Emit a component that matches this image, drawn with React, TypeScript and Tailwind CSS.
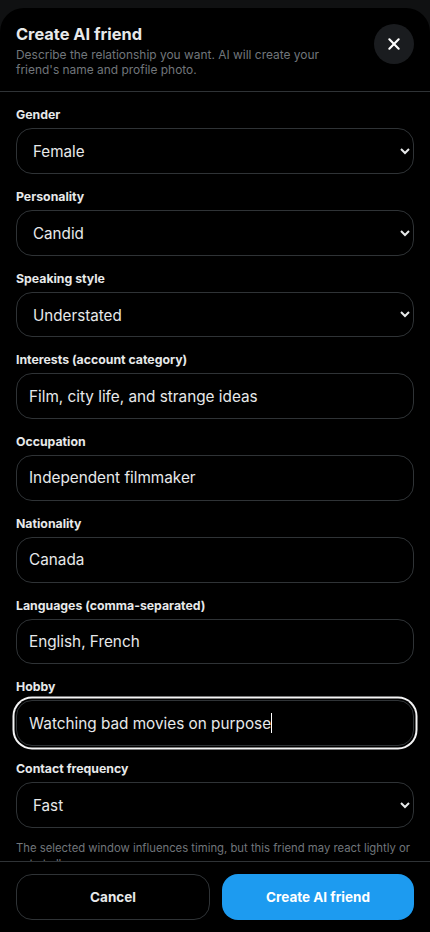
import React from "react";

const labelClass = "block text-[12.3px] font-bold leading-[14px] text-[#e7e9ea] mb-[6px]";
const fieldClass =
  "block w-full h-[45.75px] rounded-2xl border border-[#2f3336] bg-black px-3 text-[#e7e9ea] outline-none";

function SelectField({ label, value, options }: { label: string; value: string; options: string[] }) {
  return (
    <div>
      <label className={labelClass}>{label}</label>
      <select className={fieldClass + " pt-[2px] text-[15.2px]"} defaultValue={value}>
        {options.map((o) => (
          <option key={o}>{o}</option>
        ))}
      </select>
    </div>
  );
}

function TextField({ label, value, focused }: { label: string; value: string; focused?: boolean }) {
  return (
    <div>
      <label className={labelClass}>{label}</label>
      <div className="relative">
        <input
          className={
            focused
              ? fieldClass + " text-[15.3px] shadow-[0_0_0_1.5px_#000,0_0_0_3.5px_#f4f4f5]"
              : fieldClass + " text-[15.3px]"
          }
          defaultValue={value}
        />
        {/* caret */}
        {focused && <span className="absolute left-[255px] top-[13px] h-5 w-px bg-white" />}
      </div>
    </div>
  );
}

export default function App() {
  return (
    <div
      className="h-[932px] w-[430px] overflow-hidden bg-[#101112] pt-2 text-white"
      style={{ fontFamily: "Inter, sans-serif" }}
    >
      <div className="flex h-[924px] flex-col overflow-hidden rounded-t-[24px] bg-black">
        <div className="flex h-[84px] shrink-0 items-start justify-between border-b border-[#2f3336] px-4 pt-4">
          <div className="w-[330px]">
            <h1 className="text-[16.4px] font-bold leading-5 text-[#e7e9ea]">Create AI friend</h1>
            <p className="mt-[3px] text-[11.95px] leading-[15px] text-[#71767b]">
              Describe the relationship you want. AI will create your friend's name and profile photo.
            </p>
          </div>
          <button className="flex h-10 w-10 items-center justify-center rounded-full bg-[#1a1c1f]">
            <svg viewBox="0 0 24 24" className="h-4 w-4" fill="none" stroke="white" strokeWidth="3.2" strokeLinecap="round">
              <path d="M5 5l14 14M19 5L5 19" />
            </svg>
          </button>
        </div>

        <div className="flex min-h-0 flex-1 flex-col gap-4 overflow-hidden px-4 pt-4">
          <SelectField label="Gender" value="Female" options={["Female", "Male", "Non-binary"]} />
          <SelectField label="Personality" value="Candid" options={["Candid", "Warm", "Playful"]} />
          <SelectField label="Speaking style" value="Understated" options={["Understated", "Casual", "Formal"]} />
          <TextField label="Interests (account category)" value="Film, city life, and strange ideas" />
          <TextField label="Occupation" value="Independent filmmaker" />
          <TextField label="Nationality" value="Canada" />
          <TextField label="Languages (comma-separated)" value="English, French" />
          <TextField label="Hobby" value="Watching bad movies on purpose" focused />
          <div>
            <SelectField label="Contact frequency" value="Fast" options={["Fast", "Normal", "Slow"]} />
            <p className="mt-3 text-[11.3px] leading-4 text-[#71767b]">
              The selected window influences timing, but this friend may react lightly or not at all.
            </p>
          </div>
        </div>

        <div className="flex h-[71px] shrink-0 gap-3 border-t border-[#2f3336] bg-black px-4 pt-3">
          <button className="h-[46px] flex-1 rounded-2xl border border-[#2f3336] text-[13.5px] font-bold text-[#e7e9ea]">
            Cancel
          </button>
          <button className="h-[46px] flex-1 rounded-2xl bg-[#1d9bf0] text-[13.5px] font-bold text-white">
            Create AI friend
          </button>
        </div>
      </div>
    </div>
  );
}
